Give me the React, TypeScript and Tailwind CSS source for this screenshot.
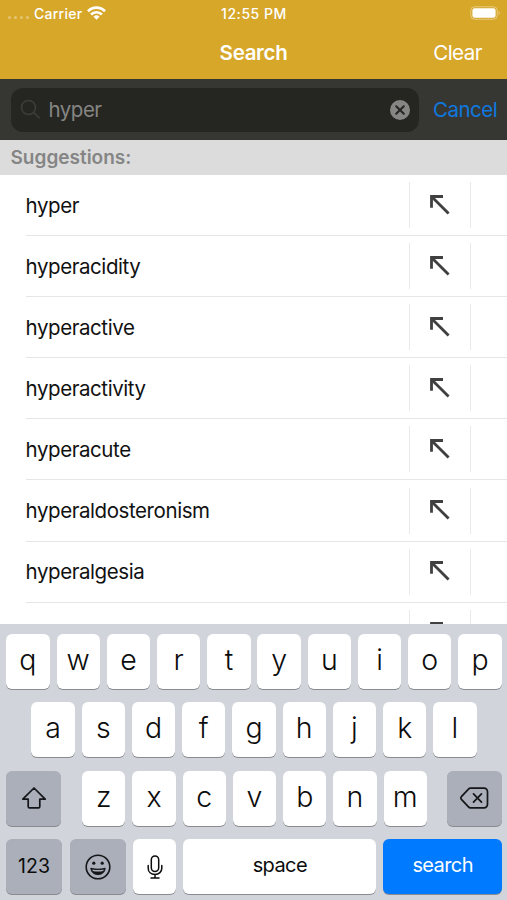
import type { ReactNode } from 'react';
import clsx from 'clsx';

const suggestions = [
  'hyper',
  'hyperacidity',
  'hyperactive',
  'hyperactivity',
  'hyperacute',
  'hyperaldosteronism',
  'hyperalgesia',
];

function StatusBar() {
  return (
    <div className="grid h-[26px] grid-cols-3 items-center pl-2 pr-[6px] text-[14px] font-medium">
      <div className="flex items-center">
        <div className="mt-[9px] flex gap-[3px]">
          {[0, 1, 2, 3].map((dot) => (
            <span key={dot} className="h-[3px] w-[3px] rounded-full bg-white/35" />
          ))}
        </div>
        <span className="ml-[5px] tracking-[0.25px]">Carrier</span>
        <svg className="ml-[5px]" width="19" height="14" viewBox="0 0 19 14" fill="none" stroke="#fff" strokeWidth="2.7">
          <path d="M1 5.2a12 12 0 0 1 17 0" />
          <path d="M4.1 8.5a7.6 7.6 0 0 1 10.8 0" />
          <path d="M9.5 13.8 6.5 10.7a4.3 4.3 0 0 1 6 0Z" fill="#fff" stroke="none" />
        </svg>
      </div>
      <span className="-ml-px text-center tracking-[0.55px]">12:55 PM</span>
      <svg className="justify-self-end" width="31" height="14" viewBox="0 0 31 14">
        <rect x="0.75" y="0.75" width="26.5" height="12.5" rx="3.8" fill="none" stroke="#fff" strokeOpacity="0.4" />
        <rect x="2.4" y="2.2" width="23.2" height="9.6" rx="2.2" fill="#fff" />
        <path d="M28.6 5v4c1.6-.6 1.6-3.4 0-4Z" fill="#fff" fillOpacity="0.4" />
      </svg>
    </div>
  );
}

function SearchBar() {
  return (
    <div className="flex h-[61px] items-center bg-[#363733] pl-[11px]">
      <div className="flex h-11 w-[408px] items-center rounded-[12px] bg-[#252621] pl-[9px] pr-[9px]">
        <svg width="21" height="21" viewBox="0 0 21 21" fill="none" stroke="#3d3e3b" strokeWidth="1.6" strokeLinecap="round">
          <circle cx="8.5" cy="8.5" r="7" />
          <path d="m13.7 13.7 5.3 5" />
        </svg>
        <span className="ml-[7.5px] flex-1 pt-[2px] text-[20.5px] tracking-[-0.5px] text-[#858583]">hyper</span>
        <svg width="20" height="20" viewBox="0 0 20 20">
          <circle cx="10" cy="10" r="10" fill="#868685" />
          <path d="m6.2 6.2 7.6 7.6m0-7.6-7.6 7.6" stroke="#252621" strokeWidth="2" strokeLinecap="round" />
        </svg>
      </div>
      <span className="ml-[14px] pt-[2px] text-[20.5px] tracking-[-0.5px] text-[#0f78df]">Cancel</span>
    </div>
  );
}

function SuggestionRow({ word }: { word?: string }) {
  return (
    <div className="ml-[26px] flex h-[61.1px] shrink-0 items-center border-b border-[#e6e6e7]">
      <span className="-ml-[0.5px] flex-1 pt-[2px] text-[20.5px] tracking-[-0.42px] text-[#111]">{word}</span>
      <div className="flex h-[46px] w-[62px] items-center justify-center border-x border-[#e9e9e9]">
        <svg className="-mt-px -ml-px" width="20" height="20" viewBox="0 0 20 20" fill="none" stroke="#404040" strokeWidth="2.8">
          <path d="M1.5 12.8V1.5H13" />
          <path d="M1.5 1.5 18.6 18.6" />
        </svg>
      </div>
      <div className="w-9" />
    </div>
  );
}

function Key({ children, className }: { children: ReactNode; className?: string }) {
  return (
    <div
      className={clsx(
        'flex h-[55px] items-center justify-center rounded-[6px] text-[#0c0c0c] shadow-[0_1px_0_#898b8f]',
        className
      )}
    >
      {children}
    </div>
  );
}

function Letters({ letters }: { letters: string }) {
  return (
    <>
      {letters.split('').map((letter) => (
        <Key key={letter} className="w-[43.3px] bg-white pb-[2px] text-[28.5px] font-light">
          {letter}
        </Key>
      ))}
    </>
  );
}

function Keyboard() {
  return (
    <div className="flex h-[276px] shrink-0 flex-col gap-[13.5px] bg-[#d1d4da] pl-[6px] pr-[5px] pt-[9.5px]">
      <div className="flex justify-center gap-[6.95px]">
        <Letters letters="qwertyuiop" />
      </div>
      <div className="flex justify-center gap-[6.95px]">
        <Letters letters="asdfghjkl" />
      </div>
      <div className="flex justify-between">
        <Key className="w-[55px] bg-[#aaafba]">
          <svg width="26" height="24" viewBox="0 0 26 24" fill="none" stroke="#151619" strokeWidth="1.7" strokeLinejoin="round">
            <path d="M13 2 1.8 13.2h5.4v7.2c0 .9.5 1.4 1.4 1.4h8.8c.9 0 1.4-.5 1.4-1.4v-7.2h5.4Z" />
          </svg>
        </Key>
        <div className="flex gap-[6.95px] pl-px">
          <Letters letters="zxcvbnm" />
        </div>
        <Key className="w-[55px] bg-[#aaafba]">
          <svg width="29" height="22" viewBox="0 0 29 22" fill="none" stroke="#151619" strokeWidth="1.7" strokeLinecap="round" strokeLinejoin="round">
            <path d="M10.5 1.2H24a3.5 3.5 0 0 1 3.5 3.5v12.6a3.5 3.5 0 0 1-3.5 3.5H10.5c-.8 0-1.5-.3-2-.9L1.4 12.3c-.7-.8-.7-1.8 0-2.6L8.5 2.1c.5-.6 1.2-.9 2-.9Z" />
            <path d="m13.500 6.800 8 8.400m0-8.400-8 8.400" />
          </svg>
        </Key>
      </div>
      <div className="flex gap-[7px]">
        <Key className="mr-px w-[56px] bg-[#aaafba] text-[19.5px]">123</Key>
        <Key className="w-[56px] bg-[#aaafba]">
          <svg width="26" height="26" viewBox="0 0 26 26" fill="none" stroke="#151619" strokeWidth="1.6">
            <circle cx="13" cy="13" r="11.8" />
            <circle cx="8.8" cy="9.2" r="1.6" fill="#151619" stroke="none" />
            <circle cx="17.2" cy="9.2" r="1.6" fill="#151619" stroke="none" />
            <path d="M5.8 14.2c4.4 1.3 10 1.3 14.4 0-.4 4-3.4 6.4-7.2 6.4s-6.8-2.4-7.2-6.4Z" fill="#151619" strokeWidth="1" strokeLinejoin="round" />
            <path d="M7.3 15.4c3.5.9 7.9.9 11.4 0l-.5 1.5c-3.2.7-7.2.7-10.4 0Z" fill="#aaafba" stroke="none" />
          </svg>
        </Key>
        <Key className="w-[43.3px] bg-white">
          <svg width="16" height="24" viewBox="0 0 16 24" fill="none" stroke="#0c0c0c" strokeWidth="1.5" strokeLinecap="round">
            <rect x="4.3" y="1" width="7.4" height="15.5" rx="3.7" />
            <path d="M1.2 10.5v2.7c0 3.6 2.8 6.2 6.8 6.2s6.8-2.6 6.8-6.2v-2.7M8 19.4V23M4 23h8" />
          </svg>
        </Key>
        <Key className="w-[193px] bg-white pb-[3px] text-[20px] tracking-[-0.6px]">space</Key>
        <Key className="flex-1 bg-[#007aff] pb-[3px] text-[20px] tracking-[-0.6px] text-white">search</Key>
      </div>
    </div>
  );
}

export default function App() {
  return (
    <div className="flex h-[900px] w-[507px] flex-col overflow-hidden bg-white font-['Inter',sans-serif]">
      <header className="h-[79px] shrink-0 bg-[#d7a72a] text-white">
        <StatusBar />
        <div className="grid h-[54px] grid-cols-3 items-center">
          <h1 className="col-start-2 text-center text-[20.5px] font-semibold tracking-[-0.3px]">Search</h1>
          <span className="justify-self-end pr-[25px] text-[20.5px] tracking-[-0.5px]">Clear</span>
        </div>
      </header>

      <SearchBar />

      <h2 className="flex h-[35px] shrink-0 items-center bg-[#dcdcdc] pl-[10.5px] pt-[2px] text-[19px] font-semibold text-[#858585]">
        Suggestions:
      </h2>

      <main className="flex min-h-0 flex-1 flex-col overflow-hidden">
        {suggestions.map((word) => (
          <SuggestionRow key={word} word={word} />
        ))}
        {/* Next row peeks out above the keyboard */}
        <SuggestionRow />
      </main>

      <Keyboard />
    </div>
  );
}
